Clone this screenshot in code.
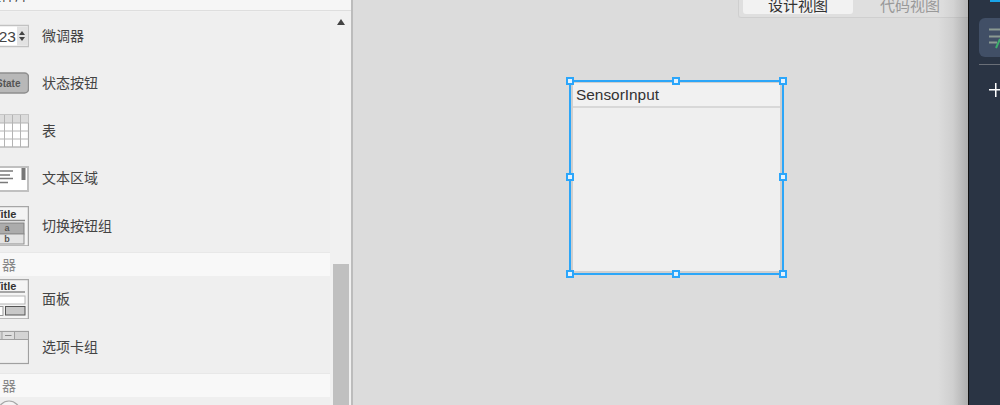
<div class="app">
  <aside class="library">
    <div class="lib-head"><span>组件库</span></div>
    <div class="lib-body">
      <div class="list">
        <div class="row">
          <div class="thumb">
            <svg width="48" height="40" viewBox="-19 -20 48 40">
              <rect x="-10" y="-10.5" width="38.5" height="21" fill="#fff" stroke="#c2c2c2" stroke-width="1.5" />
              <rect x="17" y="-9.5" width="11" height="19" fill="#e2e2e2" />
              <text x="16" y="5.5" text-anchor="end" class="t23">23</text>
              <path d="M19 -1 L22 -5 L25 -1 Z M19 1 L25 1 L22 5 Z" fill="#444" />
            </svg>
          </div>
          <span>微调器</span>
        </div>
        <div class="row">
          <div class="thumb">
            <svg width="48" height="40" viewBox="-19 -20 48 40">
              <rect x="-12" y="-10" width="40.5" height="20" rx="4" fill="#b8b8b8" stroke="#8e8e8e" stroke-width="1.5" />
              <text x="20.5" y="3.5" text-anchor="end" class="tstate">State</text>
            </svg>
          </div>
          <span>状态按钮</span>
        </div>
        <div class="row">
          <div class="thumb">
            <svg width="48" height="40" viewBox="-19 -20 48 40">
              <rect x="-10" y="-16" width="38.5" height="32" fill="#fff" stroke="#aaa" stroke-width="1.2" />
              <rect x="-10" y="-16" width="38.5" height="8" fill="#dcdcdc" />
              <path d="M-10 -8H28.5 M-10 0H28.5 M-10 8H28.5 M4.5 -16V16 M12.5 -16V16 M20.5 -16V16" stroke="#b4b4b4" fill="none" />
            </svg>
          </div>
          <span>表</span>
        </div>
        <div class="row">
          <div class="thumb">
            <svg width="48" height="40" viewBox="-19 -20 48 40">
              <rect x="-10" y="-11" width="38" height="24" fill="#fff" stroke="#c0c0c0" stroke-width="2" />
              <path d="M-10 -7H13 M-10 -3H10 M-10 0.5H13 M-10 4.5H8" stroke="#7a7a7a" stroke-width="1.3" fill="none" />
              <rect x="21.5" y="-10" width="4" height="12" fill="#777" />
            </svg>
          </div>
          <span>文本区域</span>
        </div>
        <div class="row">
          <div class="thumb">
            <svg width="48" height="40" viewBox="-19 -20 48 40">
              <rect x="-10" y="-19.5" width="38.5" height="39.5" fill="#f4f4f4" stroke="#a6a6a6" stroke-width="1.5" />
              <text x="-6" y="-8" class="ttitle">Title</text>
              <path d="M-10 -5.5H25" stroke="#8c8c8c" stroke-width="1.3" />
              <rect x="-10" y="-3" width="34" height="11" fill="#acacac" stroke="#808080" />
              <rect x="-10" y="8" width="34" height="10" fill="#e4e4e4" stroke="#909090" />
              <text x="7" y="5" class="tab">a</text>
              <text x="7" y="16" class="tab">b</text>
            </svg>
          </div>
          <span>切换按钮组</span>
        </div>
        <div class="section"><span>器</span></div>
        <div class="row">
          <div class="thumb">
            <svg width="48" height="40" viewBox="-19 -20 48 40">
              <rect x="-10" y="-19.5" width="38.5" height="39.5" fill="#f4f4f4" stroke="#a6a6a6" stroke-width="1.5" />
              <text x="-6" y="-9.5" class="ttitle">Title</text>
              <path d="M-10 -7H25" stroke="#8c8c8c" stroke-width="1.3" />
              <rect x="-10" y="-3" width="35" height="8" fill="#fff" stroke="#b4b4b4" />
              <rect x="-10" y="7.5" width="13" height="9" fill="#fff" stroke="#999" />
              <rect x="5.5" y="7.5" width="19.5" height="8.5" fill="#c8c8c8" stroke="#555" />
            </svg>
          </div>
          <span>面板</span>
        </div>
        <div class="row">
          <div class="thumb">
            <svg width="48" height="40" viewBox="-19 -20 48 40">
              <rect x="-10" y="-15.5" width="38.5" height="32" fill="#f0f0f0" stroke="#a0a0a0" stroke-width="1.2" />
              <rect x="-10" y="-15.5" width="38.5" height="8" fill="#d4d4d4" stroke="#a0a0a0" />
              <rect x="2" y="-15.5" width="12.5" height="8" fill="#dedede" stroke="#a0a0a0" />
              <path d="M5 -11.5H11.5" stroke="#888" />
            </svg>
          </div>
          <span>选项卡组</span>
        </div>
        <div class="section"><span>器</span></div>
        <div class="row">
          <div class="thumb">
            <svg width="48" height="40" viewBox="-19 -20 48 40">
              <circle cx="9" cy="-8" r="11" fill="#f4f4f4" stroke="#a6a6a6" stroke-width="1.2" />
            </svg>
          </div>
        </div>
      </div>
      <div class="track">
        <svg class="arrow" width="8" height="6" viewBox="0 0 8 6"><path d="M0 6L4 0L8 6Z" fill="#444" /></svg>
        <div class="thumbbar"></div>
      </div>
    </div>
  </aside>

  <main class="canvas">
    <div class="switch">
      <div class="seg active"><span>设计视图</span></div>
      <div class="seg second"><span>代码视图</span></div>
    </div>

    <div class="widget">
      <div class="panel">
        <div class="panel-title">SensorInput</div>
      </div>
      <i class="h tl"></i><i class="h tc"></i><i class="h tr"></i>
      <i class="h ml"></i><i class="h mr"></i>
      <i class="h bl"></i><i class="h bc"></i><i class="h br"></i>
    </div>
  </main>

  <nav class="rail">
    <div class="rail-top"></div>
    <div class="rail-item">
      <svg width="11" height="24" viewBox="0 0 11 24">
        <path d="M0 3.5H11 M0 10.5H11 M0 16.5H8" stroke="#8b9a92" stroke-width="2" fill="none" />
        <path d="M7 22L11 13" stroke="#3fae6c" stroke-width="2" fill="none" />
      </svg>
    </div>
    <div class="rail-sep"></div>
    <div class="rail-plus"></div>
  </nav>
</div>

<style>
  :global(body) {
    margin: 0;
  }

  .app {
    display: flex;
    width: 1000px;
    height: 405px;
    overflow: hidden;
    font-family: "Liberation Sans", "Noto Sans CJK SC", sans-serif;
    font-size: 14px;
    color: #444;
  }

  /* left library */
  .library {
    width: 351px;
    flex: none;
    display: flex;
    flex-direction: column;
    background: #f1f1f1;
    border-right: 2px solid #bcbcbc;
  }

  .lib-head {
    height: 10px;
    flex: none;
    display: flex;
    align-items: flex-end;
    overflow: hidden;
    background: #f6f6f6;
    border-bottom: 1px solid #dedede;
    margin-bottom: 1px;
  }

  .lib-head span {
    margin-left: -13px;
    margin-bottom: 3px;
    line-height: 24px;
    flex: none;
  }

  .lib-body {
    flex: 1;
    display: flex;
    min-height: 0;
  }

  .list {
    width: 330px;
    flex: none;
    background: #efefef;
  }

  .row {
    height: 47.5px;
    display: flex;
    align-items: center;
    gap: 13px;
  }

  .row span {
    padding-bottom: 2px;
  }

  .thumb {
    width: 29px;
    height: 40px;
    flex: none;
    display: flex;
    justify-content: flex-end;
    overflow: hidden;
  }

  .thumb svg {
    flex: none;
  }

  .section {
    height: 23px;
    margin-top: 2px;
    display: flex;
    align-items: center;
    padding-left: 2px;
    background: #f8f8f8;
    border-top: 1px solid #e8e8e8;
    color: #888;
    font-size: 14px;
  }

  .track {
    flex: 1;
    display: flex;
    flex-direction: column;
    align-items: flex-start;
    padding-left: 3px;
  }

  .arrow {
    margin-top: 7px;
    margin-left: 4px;
    flex: none;
  }

  .thumbbar {
    width: 16px;
    flex: 1;
    margin-top: 239px;
    background: #c0c0c0;
  }

  /* thumb text */
  .t23 {
    font-size: 15.5px;
    fill: #444;
  }

  .tstate {
    font-size: 10px;
    font-weight: bold;
    fill: #555;
  }

  .ttitle {
    font-size: 11px;
    font-weight: bold;
    fill: #333;
  }

  .tab {
    font-size: 9px;
    font-weight: bold;
    fill: #555;
    text-anchor: middle;
  }

  /* centre canvas */
  .canvas {
    flex: 1;
    position: relative;
    background: linear-gradient(to right, #dcdcdc 0, #dcdcdc 585px, #cfcfcf 600px, #aeaeae 615px);
  }

  .switch {
    position: absolute;
    top: -10px;
    left: 385px;
    right: 0;
    height: 28px;
    display: flex;
    padding: 0 0 3px 4px;
    box-sizing: border-box;
    border: 1px solid rgba(0, 0, 0, 0.07);
    border-top: none;
    border-right: none;
    border-radius: 0 0 0 3px;
    background: rgba(255, 255, 255, 0.1);
  }

  .seg {
    width: 110px;
    padding-top: 5px;
    box-sizing: border-box;
    display: flex;
    align-items: center;
    justify-content: center;
    font-size: 15px;
    color: #999;
    border-radius: 3px;
  }

  .seg.second {
    width: 114px;
  }

  .seg.active {
    background: #f2f2f2;
    color: #333;
  }

  .widget {
    position: absolute;
    left: 216px;
    top: 80px;
    width: 215px;
    height: 195px;
    box-sizing: border-box;
    border: 2px solid #2ca6f8;
  }

  .panel {
    height: 100%;
    box-sizing: border-box;
    background: #efefef;
    border: 2px solid #cfcfcf;
    border-top-width: 1px;
  }

  .panel-title {
    height: 23px;
    line-height: 23px;
    padding-left: 3px;
    font-size: 15.4px;
    color: #333;
    background: #f1f1f1;
    border-bottom: 2px solid #d8d8d8;
  }

  .h {
    position: absolute;
    width: 4px;
    height: 4px;
    background: #e4f2fd;
    border: 2px solid #2ba6fb;
  }

  .tl { left: -5px; top: -5px; }
  .tc { left: 101px; top: -5px; }
  .tr { right: -5px; top: -5px; }
  .ml { left: -5px; top: 91px; }
  .mr { right: -5px; top: 91px; }
  .bl { left: -5px; bottom: -5px; }
  .bc { left: 101px; bottom: -5px; }
  .br { right: -5px; bottom: -5px; }

  /* right rail */
  .rail {
    width: 32px;
    flex: none;
    box-sizing: border-box;
    border-left: 1px solid #111;
    background: #2a3444;
    padding-left: 10px;
  }

  .rail-top {
    height: 2px;
    width: 22px;
    margin-left: 11px;
    background: #1aa4e8;
  }

  .rail-item {
    width: 40px;
    height: 39px;
    margin-top: 16px;
    border-radius: 6px;
    background: #414f66;
    display: flex;
    align-items: center;
    padding-left: 10px;
    box-sizing: border-box;
  }

  .rail-sep {
    height: 1px;
    margin-top: 7px;
    background: #6a6f78;
  }

  .rail-plus {
    width: 22px;
    height: 14px;
    margin: 18px 0 0 10px;
    background:
      linear-gradient(#fff, #fff) 0 6px / 100% 1.5px no-repeat,
      linear-gradient(#fff, #fff) 6px 0 / 1.5px 100% no-repeat;
  }
</style>
